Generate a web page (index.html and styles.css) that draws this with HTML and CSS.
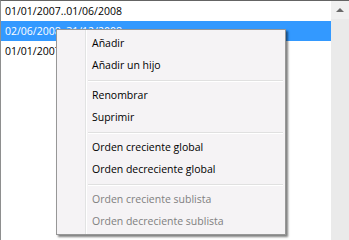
FILE: index.html
```html
<!DOCTYPE html>
<html>
<head>
    <title>Periodos</title>
    <link rel="stylesheet" href="styles.css">
</head>
<body>
    <div class="listbox">
        <div class="rows">
            <div class="row">01/01/2007..01/06/2008</div>
            <div class="row selected">02/06/2008..31/12/2008</div>
            <div class="row">01/01/2007..31/12/2008</div>
        </div>
        <div class="scrollbar">
            <div class="scroll-up"><span class="arrow"></span></div>
        </div>
    </div>

    <div class="menu">
        <div class="menu-item">Añadir</div>
        <div class="menu-item">Añadir un hijo</div>
        <div class="menu-sep"></div>
        <div class="menu-item">Renombrar</div>
        <div class="menu-item">Suprimir</div>
        <div class="menu-sep"></div>
        <div class="menu-item">Orden creciente global</div>
        <div class="menu-item">Orden decreciente global</div>
        <div class="menu-sep"></div>
        <div class="menu-item disabled">Orden creciente sublista</div>
        <div class="menu-item disabled">Orden decreciente sublista</div>
    </div>
</body>
</html>
```
FILE: styles.css
```css
body {
    margin: 0;
    font-family: "Open Sans", sans-serif;
    font-size: 10.5px;
    background: #fff;
    color: #000;
}

.listbox {
    display: flex;
    height: 240px;
    border-top: 1px solid #646464;
    border-left: 1px solid #8e8f8f;
    box-sizing: border-box;
}

.rows {
    flex: 1;
}

.row {
    height: 20px;
    line-height: 20px;
    padding-left: 4px;
    white-space: nowrap;
}

.row.selected {
    background-color: #3399ff;
    color: #fff;
}

.scrollbar {
    width: 18px;
    background-color: #eaeaea;
}

.scroll-up {
    height: 18px;
    background-color: #f0f0f0;
    display: flex;
    align-items: center;
    justify-content: center;
}

.arrow {
    width: 0;
    height: 0;
    border-left: 4px solid transparent;
    border-right: 4px solid transparent;
    border-bottom: 4px solid #6a6a6a;
    margin-top: -1px;
}

/* context menu over the list */
.menu {
    position: absolute;
    left: 56px;
    top: 29px;
    width: 230px;
    box-sizing: border-box;
    padding: 2px 0;
    border: 1px solid #979797;
    background-color: #f5f3f5;
    background-image: linear-gradient(to right, transparent 28px, #e2e3e3 28px, #e2e3e3 29px, #fff 29px, #fff 30px, transparent 30px);
    box-shadow: 2px 2px 2px rgba(0, 0, 0, 0.5);
}

.menu-item {
    height: 22px;
    line-height: 22px;
    padding-left: 35px;
    white-space: nowrap;
}

.menu-item.disabled {
    color: #808080;
}

.menu-sep {
    height: 1px;
    margin: 4px 2px 2px 31px;
    background-color: #e0e0e0;
    border-bottom: 1px solid #fff;
}
```
